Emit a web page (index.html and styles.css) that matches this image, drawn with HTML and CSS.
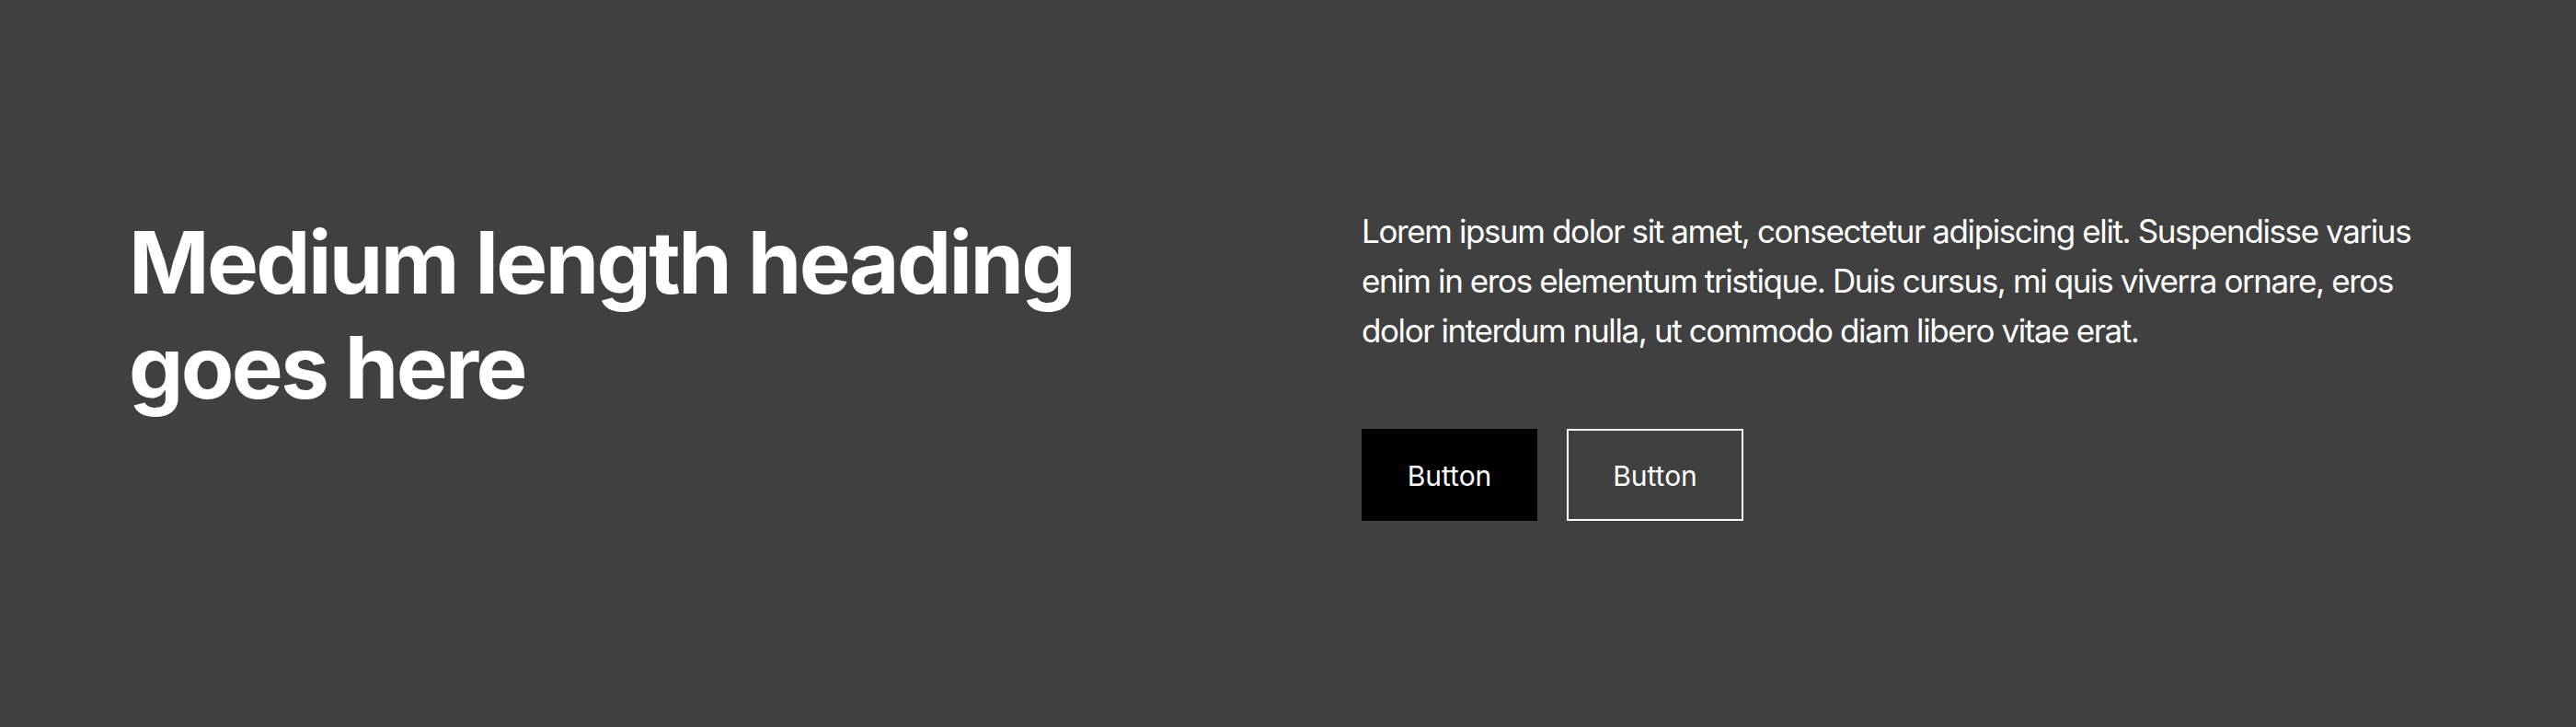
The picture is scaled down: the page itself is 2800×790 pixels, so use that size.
FILE: index.html
```html
<!DOCTYPE html>
<html lang="en">
<head>
<meta charset="utf-8">
<title>Header</title>
<link rel="stylesheet" href="styles.css">
</head>
<body>
<section class="header">
  <div class="grid">
    <div class="col-left">
      <h1 class="heading">Medium length heading goes here</h1>
    </div>
    <div class="col-right">
      <p class="text">Lorem ipsum dolor sit amet, consectetur adipiscing elit. Suspendisse varius enim in eros elementum tristique. Duis cursus, mi quis viverra ornare, eros dolor interdum nulla, ut commodo diam libero vitae erat.</p>
      <div class="actions">
        <a class="btn btn-primary" href="#">Button</a>
        <a class="btn btn-secondary" href="#">Button</a>
      </div>
    </div>
  </div>
</section>
</body>
</html>
```
FILE: styles.css
```css
html, body {
  margin: 0;
  padding: 0;
}
body {
  background: #404040;
  color: #ffffff;
  font-family: Inter, "Noto Sans", "Liberation Sans", sans-serif;
}
.header {
  box-sizing: border-box;
  height: 790px;
  padding: 224px 140px 224px;
}
.grid {
  display: grid;
  grid-template-columns: 1fr 1fr;
  column-gap: 160px;
  align-items: start;
}
.heading {
  margin: 4px 0 0;
  font-size: 94px;
  line-height: 114px;
  font-weight: 700;
  letter-spacing: -0.028em;
}
.text {
  margin: 0;
  font-size: 35px;
  line-height: 54px;
  font-weight: 400;
  letter-spacing: -0.04em;
}
.actions {
  display: flex;
  gap: 32px;
  margin-top: 80px;
}
.btn {
  box-sizing: border-box;
  display: flex;
  align-items: center;
  justify-content: center;
  height: 100px;
  width: 191px;
  padding-top: 2px;
  font-size: 30px;
  line-height: 1.5;
  color: #ffffff;
  text-decoration: none;
  border: 2px solid #ffffff;
}
.btn-primary {
  background: #000000;
  border-color: #000000;
}
.btn-secondary {
  width: 192px;
  background: transparent;
}
```
